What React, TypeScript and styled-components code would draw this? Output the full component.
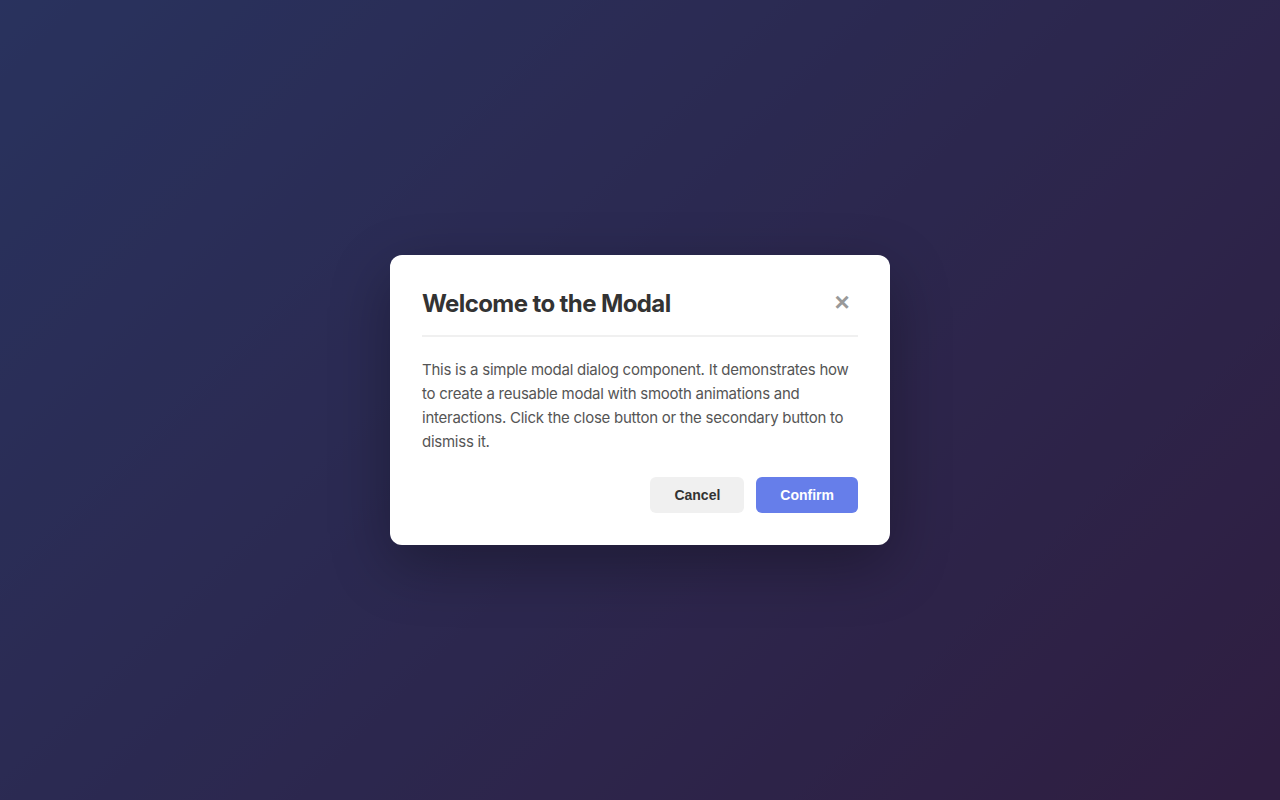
import React from "react"
import styled, { createGlobalStyle } from "styled-components"

const GlobalStyle = createGlobalStyle`
  * {
    box-sizing: border-box;
  }

  html,
  body {
    margin: 0;
    padding: 0;
    height: 100%;
  }

  body {
    font-family: Inter, "Noto Sans", sans-serif;
  }

  #root {
    height: 100%;
  }
`

const Page = styled.div`
  position: relative;
  width: 100%;
  height: 100vh;
  background: linear-gradient(135deg, #667eea 0%, #764ba2 100%);
`

const Overlay = styled.div`
  position: absolute;
  inset: 0;
  display: flex;
  align-items: center;
  justify-content: center;
  background: rgba(0, 0, 0, 0.6);
`

const Modal = styled.div`
  width: 500px;
  padding: 32px;
  background: #fff;
  border-radius: 12px;
  box-shadow: 0 20px 60px rgba(0, 0, 0, 0.3);
`

const Header = styled.div`
  display: flex;
  align-items: center;
  justify-content: space-between;
  padding-bottom: 14px;
  margin-bottom: 21px;
  border-bottom: 2px solid #f0f0f0;
`

const Title = styled.h2`
  margin: 0;
  font-size: 24px;
  line-height: 34px;
  font-weight: 700;
  letter-spacing: -0.6px;
  color: #333;
`

const Close = styled.button`
  display: flex;
  align-items: center;
  justify-content: center;
  width: 32px;
  height: 32px;
  padding: 0 0 4px;
  border: none;
  background: none;
  color: #999;
  font-family: "Liberation Sans", Arial, sans-serif;
  font-size: 26px;
  font-weight: 700;
  line-height: 1;
  cursor: pointer;
`

const Body = styled.p`
  margin: 0 0 23px;
  font-size: 15px;
  line-height: 24px;
  letter-spacing: -0.25px;
  color: #555;
`

const Footer = styled.div`
  display: flex;
  justify-content: flex-end;
  gap: 12px;
`

const Button = styled.button<{ $primary?: boolean }>`
  padding: 10px 24px;
  height: 36px;
  border: none;
  border-radius: 6px;
  font-family: "Liberation Sans", Arial, sans-serif;
  font-size: 14px;
  font-weight: 700;
  cursor: pointer;
  color: ${(p) => (p.$primary ? "#fff" : "#333")};
  background: ${(p) => (p.$primary ? "#667eea" : "#f0f0f0")};
`

const App: React.FC = () => {
  return (
    <Page>
      <GlobalStyle />
      <Overlay>
        <Modal>
          <Header>
            <Title>Welcome to the Modal</Title>
            <Close aria-label="Close">×</Close>
          </Header>
          <Body>
            This is a simple modal dialog component. It demonstrates how to
            create a reusable modal with smooth animations and interactions.
            Click the close button or the secondary button to dismiss it.
          </Body>
          <Footer>
            <Button>Cancel</Button>
            <Button $primary>Confirm</Button>
          </Footer>
        </Modal>
      </Overlay>
    </Page>
  )
}

export default App
